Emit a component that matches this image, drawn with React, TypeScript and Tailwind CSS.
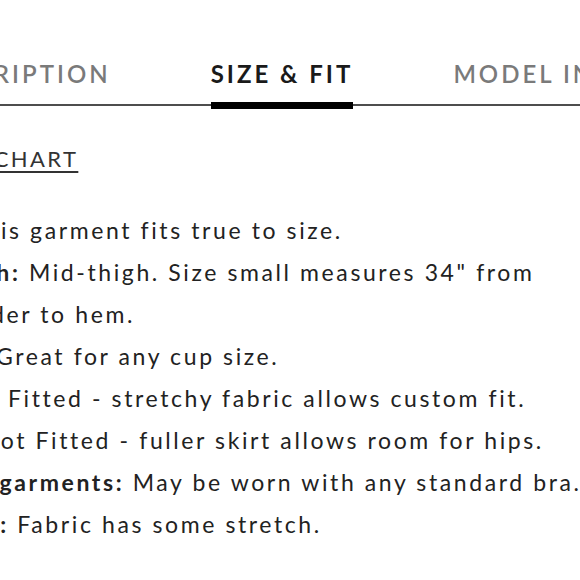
export default function App() {
  return (
    <div className="w-[580px] h-[580px] overflow-hidden bg-white font-['Lato',_'Liberation_Sans',_sans-serif] text-[#222]">
      {/* tabs */}
      <div className="pt-[59px] border-b-2 border-[#4d4d4d]">
        <div className="w-[564px] grid grid-cols-[minmax(0,1fr)_auto_minmax(0,1fr)] gap-x-[100px] items-end">
          <div className="justify-self-end whitespace-nowrap text-[24px] leading-[30px] font-semibold tracking-[3px] text-[#7a7a7a] pb-[15px]">
            DESCRIPTION
          </div>
          <div className="whitespace-nowrap text-[24px] leading-[30px] font-bold tracking-[3px] text-[#1a1a1a] pb-[13px] border-b-[7px] border-black -mb-[5px]">
            SIZE &amp; FIT
          </div>
          <div className="justify-self-start whitespace-nowrap text-[24px] leading-[30px] font-semibold tracking-[3px] text-[#7a7a7a] pb-[15px]">
            MODEL INFO
          </div>
        </div>
      </div>

      {/* size chart link */}
      <div className="mt-[38px] -ml-[68px] whitespace-nowrap text-[22px] leading-[30px] tracking-[2.4px] underline underline-offset-[4px] decoration-[1.5px] text-[#333]">
        SIZE CHART
      </div>

      {/* fit details - the screenshot is cropped on the left, so each line is nudged to where its cut falls */}
      <div className="mt-[35px] -ml-[74px] text-[23px] leading-[42px] tracking-[2.6px] whitespace-nowrap">
        <p className="-ml-[8px]"><b>Fit:</b> This garment fits true to size.</p>
        <p>
          <b>Length:</b> Mid-thigh. Size small measures 34" from
        </p>
        <p className="-ml-[2px]">shoulder to hem.</p>
        <p className="-ml-[4px]"><b>Bust:</b> Great for any cup size.</p>
        <p className="-ml-[7px]"><b>Waist:</b> Fitted - stretchy fabric allows custom fit.</p>
        <p className="-ml-[19px]"><b>Hips:</b> Not Fitted - fuller skirt allows room for hips.</p>
        <p className="-ml-[3px]"><b>Undergarments:</b> May be worn with any standard bra.</p>
        <p className="-ml-[3px]"><b>Fabric:</b> Fabric has some stretch.</p>
      </div>
    </div>
  );
}
